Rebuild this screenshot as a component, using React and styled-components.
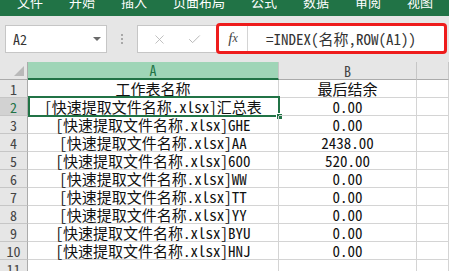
import React from "react";
import styled, { createGlobalStyle } from "styled-components";
import { X, Check } from "lucide-react";

const GlobalStyle = createGlobalStyle`
  html, body {
    margin: 0;
    padding: 0;
    background: #fff;
  }
  body {
    font-family: "Noto Sans CJK SC", "Liberation Sans", sans-serif;
  }
`;

const CELL_FONT = `"Noto Sans Mono CJK SC", "Noto Sans CJK SC", "Liberation Mono", monospace`;
const GREEN = "#217346";

const Window = styled.div`
  width: 449px;
  height: 271px;
  overflow: hidden;
  display: flex;
  flex-direction: column;
  background: #fff;
`;

const TabBar = styled.div`
  height: 16px;
  flex: none;
  background: ${GREEN};
  display: flex;
  gap: 26px;
  padding-left: 17px;
  overflow: hidden;
`;

const Tab = styled.span`
  color: #fff;
  font-size: 13px;
  line-height: 13px;
  margin-top: -5px;
  white-space: nowrap;
`;

const Toolbar = styled.div`
  height: 46px;
  flex: none;
  box-sizing: border-box;
  background: #e6e6e6;
  display: flex;
  align-items: center;
  padding: 0 3px 0 5px;
`;

const NameBox = styled.div`
  width: 102px;
  height: 28px;
  box-sizing: border-box;
  background: #fff;
  border: 1px solid #c6c6c6;
  display: flex;
  align-items: center;
  justify-content: space-between;
  padding: 0 5px 0 7px;
  font-family: ${CELL_FONT};
  font-size: 14px;
  color: #333;
`;

const Caret = styled.span`
  width: 0;
  height: 0;
  border-left: 4px solid transparent;
  border-right: 4px solid transparent;
  border-top: 4px solid #6a6a6a;
`;

const Dots = styled.div`
  width: 30px;
  display: flex;
  flex-direction: column;
  align-items: center;
  gap: 2px;
  & > span {
    width: 2px;
    height: 2px;
    background: #a8a8a8;
  }
`;

const FormulaBox = styled.div`
  flex: 1;
  height: 28px;
  box-sizing: border-box;
  background: #fff;
  border: 1px solid #c6c6c6;
  display: flex;
  align-items: stretch;
`;

const ActionButtons = styled.div`
  width: 78px;
  display: flex;
  align-items: center;
  justify-content: space-around;
  padding: 0 4px;
  box-sizing: border-box;
  color: #b8b8b8;
`;

const Highlight = styled.div`
  flex: 1;
  margin: -3px -2px -2px 0;
  border: 3px solid #ee1c1c;
  border-radius: 4px;
  display: flex;
  align-items: center;
  background: #fff;
`;

const FxLabel = styled.div`
  width: 28px;
  height: 100%;
  display: flex;
  align-items: center;
  justify-content: center;
  border-right: 1px solid #d4d4d4;
  font-family: "Liberation Serif", serif;
  font-style: italic;
  font-size: 15px;
  color: #444;
  & > sub {
    font-size: 12px;
    vertical-align: baseline;
  }
`;

const FormulaText = styled.div`
  padding-left: 18px;
  font-family: ${CELL_FONT};
  font-size: 15px;
  color: #333;
  white-space: nowrap;
`;

const Sheet = styled.div`
  flex: 1;
  display: grid;
  grid-template-columns: 28px 251px 138px 1fr;
  grid-auto-rows: 18px;
  font-family: ${CELL_FONT};
`;

const Corner = styled.div`
  background: #e6e6e6;
  border-right: 1px solid #ababab;
  border-bottom: 1px solid #ababab;
  box-sizing: border-box;
  display: flex;
  align-items: flex-end;
  justify-content: flex-end;
  padding: 0 3px 3px 0;
  &::after {
    content: "";
    width: 0;
    height: 0;
    border-left: 10px solid transparent;
    border-bottom: 10px solid #b9b9b9;
  }
`;

const ColHead = styled.div`
  box-sizing: border-box;
  background: ${(p) => (p.active ? "#9fd5b7" : "#e6e6e6")};
  color: ${(p) => (p.active ? GREEN : "#444")};
  border-right: 1px solid #c6c6c6;
  border-bottom: ${(p) => (p.active ? `2px solid ${GREEN}` : "1px solid #ababab")};
  display: flex;
  align-items: center;
  justify-content: center;
  font-size: 14px;
  line-height: 16px;
`;

const RowHead = styled.div`
  box-sizing: border-box;
  background: ${(p) => (p.active ? "#d2d2d2" : "#e6e6e6")};
  color: ${(p) => (p.active ? GREEN : "#444")};
  border-right: 1px solid #ababab;
  border-bottom: 1px solid #c6c6c6;
  display: flex;
  align-items: center;
  justify-content: center;
  font-size: 14px;
  line-height: 16px;
`;

const Cell = styled.div`
  position: relative;
  box-sizing: border-box;
  border-right: 1px solid #d4d4d4;
  border-bottom: 1px solid #d4d4d4;
  display: flex;
  align-items: center;
  justify-content: center;
  font-size: 15px;
  line-height: 17px;
  color: #111;
  white-space: nowrap;
`;

const Selection = styled.div`
  position: absolute;
  top: -2px;
  left: 0;
  right: -2px;
  bottom: -2px;
  border: 2px solid ${GREEN};
  pointer-events: none;
  &::after {
    content: "";
    position: absolute;
    right: -5px;
    bottom: -5px;
    width: 5px;
    height: 5px;
    background: ${GREEN};
    border: 1px solid #fff;
  }
`;

const tabs = ["文件", "开始", "插入", "页面布局", "公式", "数据", "审阅", "视图"];

const rows = [
  ["工作表名称", "最后结余"],
  ["[快速提取文件名称.xlsx]汇总表", "0.00"],
  ["[快速提取文件名称.xlsx]GHE", "0.00"],
  ["[快速提取文件名称.xlsx]AA", "2438.00"],
  ["[快速提取文件名称.xlsx]600", "520.00"],
  ["[快速提取文件名称.xlsx]WW", "0.00"],
  ["[快速提取文件名称.xlsx]TT", "0.00"],
  ["[快速提取文件名称.xlsx]YY", "0.00"],
  ["[快速提取文件名称.xlsx]BYU", "0.00"],
  ["[快速提取文件名称.xlsx]HNJ", "0.00"],
  ["", ""],
];

export default function App() {
  return (
    <Window>
      <GlobalStyle />
      <TabBar>
        {tabs.map((t) => (
          <Tab key={t}>{t}</Tab>
        ))}
      </TabBar>
      <Toolbar>
        <NameBox>
          A2
          <Caret />
        </NameBox>
        <Dots>
          <span />
          <span />
          <span />
        </Dots>
        <FormulaBox>
          <ActionButtons>
            <X size={15} strokeWidth={1.4} />
            <Check size={15} strokeWidth={1.6} />
          </ActionButtons>
          <Highlight>
            <FxLabel>
              f<sub>x</sub>
            </FxLabel>
            <FormulaText>=INDEX(名称,ROW(A1))</FormulaText>
          </Highlight>
        </FormulaBox>
      </Toolbar>
      <Sheet>
        <Corner />
        <ColHead active>A</ColHead>
        <ColHead>B</ColHead>
        <ColHead />
        {rows.map((r, i) => (
          <React.Fragment key={i}>
            <RowHead active={i === 1}>{i + 1}</RowHead>
            <Cell>
              {r[0]}
              {i === 1 && <Selection />}
            </Cell>
            <Cell>{r[1]}</Cell>
            <Cell />
          </React.Fragment>
        ))}
      </Sheet>
    </Window>
  );
}
